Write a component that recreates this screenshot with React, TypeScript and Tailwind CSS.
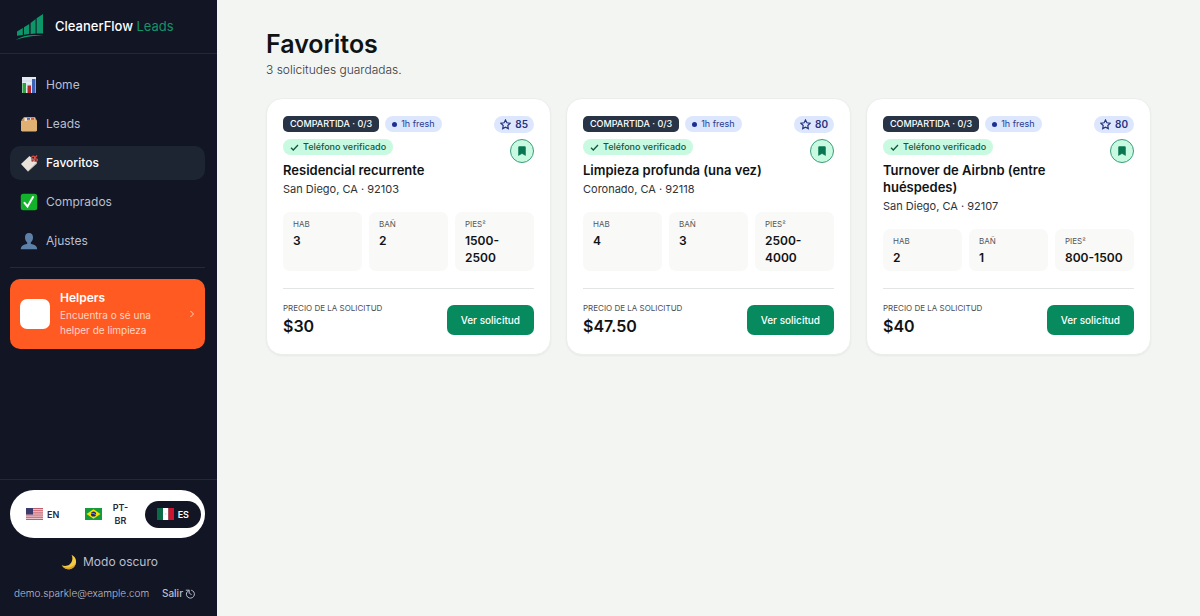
import { useState } from "react";
import type { ReactNode } from "react";

type Lang = "en" | "pt" | "es";

interface Lead {
  id: number;
  title: string;
  location: string;
  beds: string;
  baths: string;
  sqft: string;
  price: string;
  score: number;
}

const leads: Lead[] = [
  {
    id: 1,
    title: "Residencial recurrente",
    location: "San Diego, CA · 92103",
    beds: "3",
    baths: "2",
    sqft: "1500-2500",
    price: "$30",
    score: 85,
  },
  {
    id: 2,
    title: "Limpieza profunda (una vez)",
    location: "Coronado, CA · 92118",
    beds: "4",
    baths: "3",
    sqft: "2500-4000",
    price: "$47.50",
    score: 80,
  },
  {
    id: 3,
    title: "Turnover de Airbnb (entre huéspedes)",
    location: "San Diego, CA · 92107",
    beds: "2",
    baths: "1",
    sqft: "800-1500",
    price: "$40",
    score: 80,
  },
];

function LogoIcon() {
  return (
    <svg viewBox="0 0 30 28" className="h-7 w-[30px] shrink-0" fill="#0d9668" aria-hidden="true">
      <path d="M2 18.500 7.800 15v7L2 22.800zM9 14.300 14.200 11v10L9 21.800zM15.600 10 20.600 6v14.500l-5 .400zM21.600 5.300 28 1v19.500h-6.400z" />
      <path d="M.5 27C7 22.500 17 20.800 28.500 22.800 18 22.300 9 24 .5 27z" />
    </svg>
  );
}

function ChartEmoji() {
  return (
    <svg viewBox="0 0 18 18" className="size-[18px]" aria-hidden="true">
      <path fill="#e3eaf2" d="M2 1h14v16H2z" />
      <path stroke="#bccbdc" strokeWidth=".6" d="M2 5h14M2 9h14M2 13h14" />
      <path fill="#27a43a" d="M2.500 7h3.500v10H2.500z" />
      <path fill="#b3262a" d="M7.500 9.500H11V17H7.500z" />
      <path fill="#3c62b8" d="M12 3h3.500v14H12z" />
    </svg>
  );
}

function FolderEmoji() {
  return (
    <svg viewBox="0 0 18 18" className="size-[18px]" aria-hidden="true">
      <path fill="#c89558" d="M1.500 5 4 2h11l1.500 3v11h-15z" />
      <path fill="#f2e6d6" d="M4.500 3h10v4h-10z" />
      <path fill="#5965b5" d="M7 3h3v2H7z" />
      <path fill="#d85745" d="M11 3h3v2h-3z" />
      <path fill="#e0b173" d="M1 6h5.500l1-1.200H16L17 6v9.500l-1 1H2l-1-1z" />
    </svg>
  );
}

function BookmarkEmoji() {
  return (
    <svg viewBox="0 0 18 18" className="size-[18px]" aria-hidden="true">
      <path fill="#e9e2da" d="M1 10 9.500 2 17 8.500 8 17.500z" />
      <path fill="#cfc5bb" d="m1 10 7 6.500 9-8v1L8 17.500z" />
      <path fill="none" stroke="#d9534c" strokeWidth="1.200" d="M12.800 6.200c-2-1-1.500-4 .500-4s1.500 3-.5 4c2-1.500 5-2 4.500 0s-3 1-4.500 0zM12.800 6.200 17 1.500" />
      <circle cx="12.300" cy="6.700" r="1" fill="#a83a36" />
    </svg>
  );
}

function CheckEmoji() {
  return (
    <svg viewBox="0 0 18 18" className="size-[18px]" aria-hidden="true">
      <rect x=".8" y=".8" width="16.400" height="16.400" rx="2.500" fill="#12b32a" />
      <path fill="none" stroke="#fff" strokeWidth="2" strokeLinecap="round" d="m4.500 9.800 3 3.700 5.500-9.500" />
    </svg>
  );
}

function UserEmoji() {
  return (
    <svg viewBox="0 0 18 18" className="size-[18px]" aria-hidden="true">
      <path
        fill="#5d80a8"
        d="M9 1C6.300 1 4.800 3 5 5.800c.1 2 .9 3.600 2.200 4.600v1.400C3.500 12.800 1 13.800.800 17.300h16.400c-.2-3.500-2.700-4.500-6.400-5.500v-1.400c1.300-1 2.100-2.600 2.200-4.600C13.200 3 11.700 1 9 1z"
      />
    </svg>
  );
}

function MoonEmoji() {
  return (
    <svg viewBox="0 0 16 16" className="size-4" aria-hidden="true">
      <path fill="#f6c944" d="M10.500.8c3.300 1.500 5 4.600 4.500 7.900-.6 4-4.200 6.900-8.200 6.500-2.600-.2-4.800-1.700-6-3.900 2.500 1.200 5.500 1 7.700-.7 3-2.300 3.700-6.300 2-9.800z" />
      <path fill="#d9a02c" d="M15 8.700c-.6 4-4.200 6.900-8.200 6.500-2.600-.2-4.800-1.700-6-3.900 2 2 5 2.700 8 1.900 3-.7 5.200-2.400 6.200-4.500z" />
    </svg>
  );
}

function UsFlag() {
  return (
    <svg viewBox="0 0 17 12" className="h-3 w-[17px] shrink-0" aria-hidden="true">
      <path fill="#f3dfe2" d="M0 0h17v12H0z" />
      <path stroke="#c0505f" strokeWidth=".92" d="M0 .5h17M0 2.300h17M0 4.200h17M0 6h17M0 7.900h17M0 9.700h17M0 11.500h17" />
      <path fill="#3c3b6e" d="M0 0h7v6.500H0z" />
    </svg>
  );
}

function BrFlag() {
  return (
    <svg viewBox="0 0 17 12" className="h-3 w-[17px] shrink-0" aria-hidden="true">
      <path fill="#149b3e" d="M0 0h17v12H0z" />
      <path fill="#fedf00" d="M8.500 1.200 15.500 6l-7 4.800L1.500 6z" />
      <circle cx="8.500" cy="6" r="2.600" fill="#1c2a70" />
      <path fill="none" stroke="#fff" strokeWidth=".5" d="M6.100 5.400c1.800-.2 3.500.3 4.800 1.400" />
    </svg>
  );
}

function MxFlag() {
  return (
    <svg viewBox="0 0 17 12" className="h-3 w-[17px] shrink-0" aria-hidden="true">
      <path fill="#0b6b47" d="M0 0h6v12H0z" />
      <path fill="#fff" d="M6 0h5.500v12H6z" />
      <path fill="#ce1530" d="M11.500 0H17v12h-5.500z" />
      <circle cx="8.700" cy="6" r=".8" fill="#ddd3c0" />
    </svg>
  );
}

const navItems: { label: string; icon: ReactNode }[] = [
  { label: "Home", icon: <ChartEmoji /> },
  { label: "Leads", icon: <FolderEmoji /> },
  { label: "Favoritos", icon: <BookmarkEmoji /> },
  { label: "Comprados", icon: <CheckEmoji /> },
  { label: "Ajustes", icon: <UserEmoji /> },
];

const languages: { id: Lang; label: string; flag: ReactNode }[] = [
  { id: "en", label: "EN", flag: <UsFlag /> },
  { id: "pt", label: "PT-BR", flag: <BrFlag /> },
  { id: "es", label: "ES", flag: <MxFlag /> },
];

function Sidebar() {
  const [lang, setLang] = useState<Lang>("es");

  return (
    <aside className="flex w-[217px] shrink-0 flex-col bg-[#121523] text-[#b9bfd0]">
      <div className="flex h-[54px] items-center gap-2.5 border-b border-[#242838] pl-[15px]">
        <LogoIcon />
        <span className="text-[13px] font-medium whitespace-nowrap text-white">
          CleanerFlow <span className="font-normal text-[#129467]">Leads</span>
        </span>
      </div>

      <nav className="flex flex-col gap-[5px] pt-3.5 pr-3 pl-2.5">
        {navItems.map((item) => {
          const active = item.label === "Favoritos";
          return (
            <a
              key={item.label}
              href="#"
              aria-current={active ? "page" : undefined}
              className={`flex h-[34px] items-center gap-2 rounded-[10px] px-2.5 text-xs ${
                active ? "bg-[#1d2432] font-medium text-white" : ""
              }`}
            >
              {item.icon}
              {item.label}
            </a>
          );
        })}
        <hr className="mt-1 border-[#222b38]" />
        <a href="#" className="mt-1.5 flex h-[70px] items-center gap-2.5 rounded-[10px] bg-[#ff5a22] px-2.5 text-[#ffd5c5]">
          <span className="size-[30px] shrink-0 rounded-[7px] bg-white" />
          <span className="flex-1 text-[10px] leading-[15px]">
            <strong className="mb-0.5 block text-xs font-semibold text-white">Helpers</strong>
            Encuentra o sé una helper de limpieza
          </span>
          <svg viewBox="0 0 6 8" className="h-2 w-1.5 shrink-0" fill="none" stroke="currentColor" aria-hidden="true">
            <path d="m1.500 1 3 3-3 3" />
          </svg>
        </a>
      </nav>

      <div className="mt-auto border-t border-[#242838] pt-2.5 pr-3 pb-[15px] pl-2.5">
        <div className="flex h-12 items-center justify-between rounded-full bg-white px-1">
          {languages.map(({ id, label, flag }) => (
            <button
              key={id}
              type="button"
              aria-pressed={lang === id}
              onClick={() => setLang(id)}
              className={`flex min-h-[27px] items-center gap-1 rounded-full px-3 text-[9px] leading-[13px] font-semibold ${
                lang === id ? "bg-[#121523] text-white" : "text-[#242838]"
              }`}
            >
              {flag}
              {/* "PT-BR" breaks after the hyphen */}
              <span className={id === "pt" ? "w-6 pl-1" : "whitespace-nowrap"}>{label}</span>
            </button>
          ))}
        </div>
        <button type="button" className="mt-4 flex w-full items-center justify-center gap-1.5 pl-1 text-xs">
          <MoonEmoji />
          Modo oscuro
        </button>
        <div className="mt-4 flex items-center justify-between pr-2.5 pl-1 text-[10px] whitespace-nowrap">
          <span className="font-light">demo.sparkle@example.com</span>
          <button type="button" className="flex items-center gap-0.5 font-medium">
            Salir
            <svg viewBox="0 0 10 10" className="size-2.5" fill="none" stroke="currentColor" aria-hidden="true">
              <path d="M6.200 1.200A4 4 0 1 1 1.700 3.600M.8 1.200h3.400v3.400M4.200 1.200 1.300 4M4.800 4.200 6.500 6" />
            </svg>
          </button>
        </div>
      </div>
    </aside>
  );
}

function Stat({ label, value }: { label: string; value: string }) {
  return (
    <div className="rounded-[7px] bg-[#f9f9f8] px-2.5 pt-1.5 pb-[5px]">
      <dt className="text-[8px] leading-3 text-[#52565c]">{label}</dt>
      <dd className="mt-0.5 text-xs leading-[17px] font-semibold">{value}</dd>
    </div>
  );
}

function LeadCard({ lead }: { lead: Lead }) {
  const [saved, setSaved] = useState(true);

  return (
    <article className="flex flex-col rounded-2xl border border-[#eceeec] bg-white p-4 shadow-xs">
      <div className="flex items-start justify-between">
        <div className="pt-px">
          <div className="flex flex-wrap gap-x-1.5 gap-y-[7px] text-[9px] leading-4 whitespace-nowrap">
            <span className="rounded-[5px] bg-[#283345] px-[7px] font-medium text-white">COMPARTIDA · 0/3</span>
            <span className="flex items-center gap-1 rounded-full bg-[#dce6fd] px-[7px] text-[#283b91]">
              <span className="size-[5px] rounded-full bg-[#1d2f91]" />
              1h fresh
            </span>
            <span className="flex items-center gap-1 rounded-full bg-[#c7fae1] px-[7px] font-medium text-[#11553f]">
              <svg viewBox="0 0 9 9" className="size-[9px]" fill="none" stroke="currentColor" strokeWidth="1.300" aria-hidden="true">
                <path d="M1 4.800 3.300 7 8 2" />
              </svg>
              Teléfono verificado
            </span>
          </div>
          <h2 className="mt-[7px] text-[13px] leading-[17px] font-semibold">{lead.title}</h2>
          <p className="mt-0.5 text-[11px] leading-4 text-[#2e3337]">{lead.location}</p>
        </div>
        <div className="flex shrink-0 flex-col items-end gap-1.5 pt-px">
          <span className="flex h-[17px] items-center gap-1 rounded-full bg-[#dce6fd] px-1.5 text-[10px] font-semibold text-[#26337f]">
            <svg viewBox="0 0 24 24" className="size-[11px]" fill="none" stroke="currentColor" strokeWidth="2.500" aria-hidden="true">
              <path d="m12 2 3.100 6.300 6.900 1-5 4.900 1.200 6.800-6.200-3.200L5.800 21 7 14.200 2 9.300l6.900-1z" />
            </svg>
            {lead.score}
          </span>
          <button
            type="button"
            aria-label="Guardar solicitud"
            aria-pressed={saved}
            onClick={() => setSaved(!saved)}
            className="flex size-6 items-center justify-center rounded-full border border-[#3d9b7b] bg-[#c7fae1] text-[#087650]"
          >
            <svg viewBox="0 0 8 10" className="h-2.5 w-2" fill={saved ? "currentColor" : "none"} stroke="currentColor" strokeWidth=".5" aria-hidden="true">
              <path d="M.5 1.300Q.5.500 1.300.500h5.400q.8 0 .8.800v8.200L4 7.500.5 9.500z" />
            </svg>
          </button>
        </div>
      </div>

      <dl className="mt-[15px] grid flex-1 grid-cols-3 gap-[7px]">
        <Stat label="HAB" value={lead.beds} />
        <Stat label="BAÑ" value={lead.baths} />
        <Stat label="PIES²" value={lead.sqft} />
      </dl>

      <div className="mt-[17px] flex items-center justify-between border-t border-[#e3e5e5] pt-[13px]">
        <div>
          <div className="text-[8px] leading-3 text-[#4b4f55]">PRECIO DE LA SOLICITUD</div>
          <div className="text-base leading-6 font-semibold">{lead.price}</div>
        </div>
        <button type="button" className="h-[30px] rounded-[7px] bg-[#078a5d] px-3.5 text-[10px] font-medium text-white">
          Ver solicitud
        </button>
      </div>
    </article>
  );
}

export default function App() {
  return (
    <div className="flex min-h-screen bg-[#f3f5f3] font-['Inter',sans-serif] text-[#101314]">
      <Sidebar />
      <main className="min-w-0 flex-1 px-[49px] pt-7">
        <h1 className="text-[25px] leading-8 font-semibold">Favoritos</h1>
        <p className="mt-0.5 text-xs leading-4 font-light text-[#33383b]">3 solicitudes guardadas.</p>
        <section className="mt-5 grid grid-cols-3 gap-[15px]">
          {leads.map((lead) => (
            <LeadCard key={lead.id} lead={lead} />
          ))}
        </section>
      </main>
    </div>
  );
}
